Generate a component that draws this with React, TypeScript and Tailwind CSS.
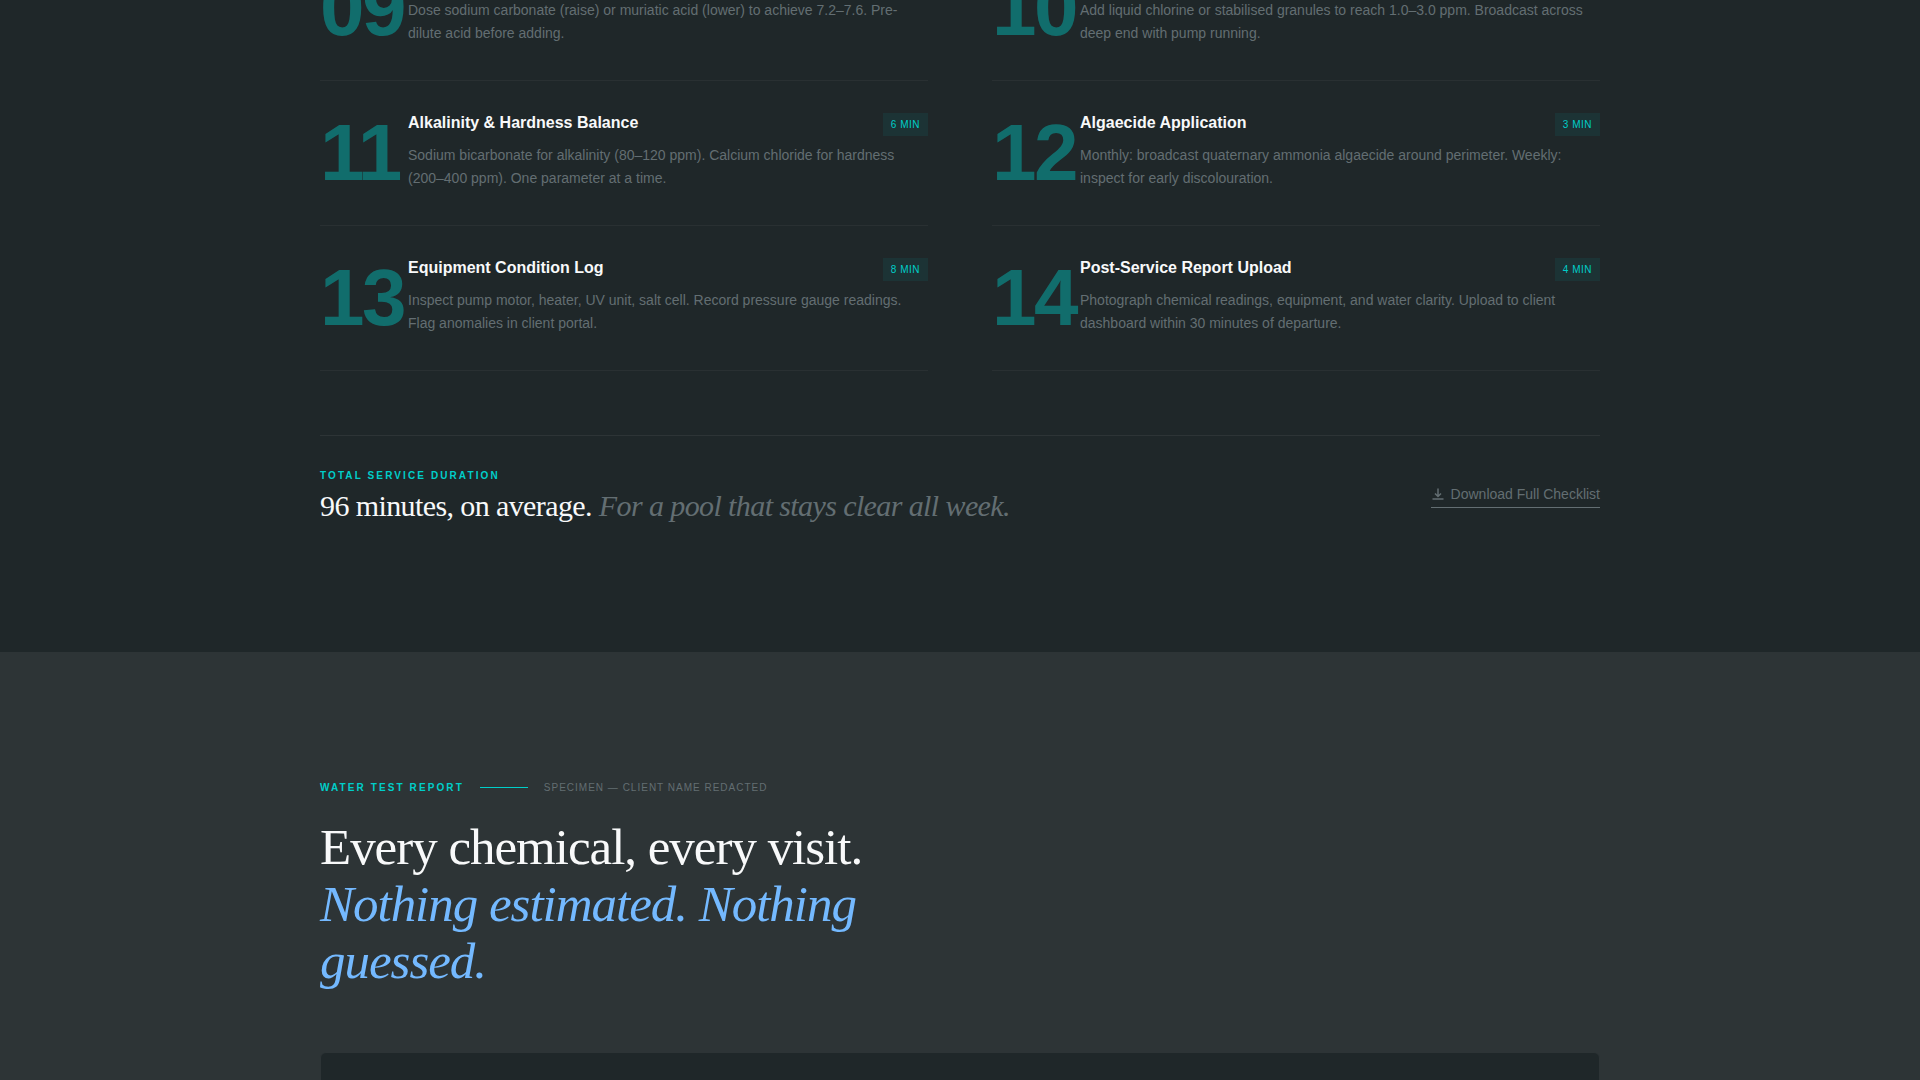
interface Step {
  number: string
  title?: string
  body: string
  minutes?: number
}

const steps: Step[] = [
  {
    number: '09',
    body: 'Dose sodium carbonate (raise) or muriatic acid (lower) to achieve 7.2–7.6. Pre-dilute acid before adding.',
  },
  {
    number: '10',
    body: 'Add liquid chlorine or stabilised granules to reach 1.0–3.0 ppm. Broadcast across deep end with pump running.',
  },
  {
    number: '11',
    title: 'Alkalinity & Hardness Balance',
    body: 'Sodium bicarbonate for alkalinity (80–120 ppm). Calcium chloride for hardness (200–400 ppm). One parameter at a time.',
    minutes: 6,
  },
  {
    number: '12',
    title: 'Algaecide Application',
    body: 'Monthly: broadcast quaternary ammonia algaecide around perimeter. Weekly: inspect for early discolouration.',
    minutes: 3,
  },
  {
    number: '13',
    title: 'Equipment Condition Log',
    body: 'Inspect pump motor, heater, UV unit, salt cell. Record pressure gauge readings. Flag anomalies in client portal.',
    minutes: 8,
  },
  {
    number: '14',
    title: 'Post-Service Report Upload',
    body: 'Photograph chemical readings, equipment, and water clarity. Upload to client dashboard within 30 minutes of departure.',
    minutes: 4,
  },
]

function StepRow({ number, title, body, minutes }: Step) {
  return (
    <li className="flex border-b border-[#2d3436]/70 py-8">
      <span className="w-22 shrink-0 text-[80px] leading-none font-bold tracking-[-0.03em] text-[#00cec9] opacity-[0.42]">
        {number}
      </span>
      <div className="min-w-0 flex-1">
        <div className="mb-2 flex h-[23px] items-start justify-between gap-4">
          {title && <h3 className="text-base leading-5 font-bold text-[#f8f9fa]">{title}</h3>}
          {minutes && (
            <span className="bg-[#00cec9]/8 px-2 py-1 text-[10px] leading-[15px] tracking-[0.05em] text-[#00cec9]">
              {minutes} MIN
            </span>
          )}
        </div>
        <p className="text-sm leading-[23px] text-[#636e72]">{body}</p>
      </div>
    </li>
  )
}

function DownloadIcon() {
  return (
    <svg
      className="size-3.5"
      viewBox="0 0 14 14"
      fill="none"
      stroke="currentColor"
      strokeWidth="1.5"
      aria-hidden="true"
    >
      <path d="M7 1.5v8M4 6.5l3 3 3-3M1.5 12h11" />
    </svg>
  )
}

function Checklist() {
  return (
    // the list is scrolled partway through its first visible row
    <section className="-mt-16 bg-[#1f2729] px-8 pb-32">
      <div className="mx-auto max-w-7xl">
        <ol className="grid grid-cols-2 gap-x-16">
          {steps.map((step) => (
            <StepRow key={step.number} {...step} />
          ))}
        </ol>

        <div className="mt-16 flex items-center justify-between border-t border-[#2d3436] pt-8">
          <div>
            <p className="mb-1 text-[10px] leading-4 font-bold tracking-[0.21em] text-[#00cec9]">
              TOTAL SERVICE DURATION
            </p>
            <p className="font-['Liberation_Serif',serif] text-[30px] leading-9 tracking-[-0.02em] text-[#f8f9fa]">
              96 minutes, on average. <em className="text-[#636e72]">For a pool that stays clear all week.</em>
            </p>
          </div>
          <a
            href="#checklist"
            className="flex items-center gap-1.5 border-b border-[#636e72] pb-[3px] text-sm text-[#636e72]"
          >
            <DownloadIcon />
            Download Full Checklist
          </a>
        </div>
      </div>
    </section>
  )
}

function Report() {
  return (
    <section className="px-8 pt-32">
      <div className="mx-auto max-w-7xl">
        <div className="mb-6 flex items-center gap-4 text-[10px] leading-[15px]">
          <span className="font-bold tracking-[0.21em] text-[#00cec9]">WATER TEST REPORT</span>
          <span className="h-px w-12 bg-[#00cec9]" />
          <span className="tracking-[0.1em] text-[#636e72]">SPECIMEN — CLIENT NAME REDACTED</span>
        </div>
        <h2 className="mb-[62px] max-w-[576px] font-['Liberation_Serif',serif] text-[51px] leading-[57px] tracking-[-0.02em] text-[#f8f9fa]">
          Every chemical, every visit.
          <br />
          <em className="text-[#74b9ff]">Nothing estimated. Nothing guessed.</em>
        </h2>
        <div className="h-40 rounded-md border border-[#2d3436] bg-[#1f2729]" />
      </div>
    </section>
  )
}

export default function App() {
  return (
    <main className="flow-root h-screen overflow-hidden bg-[#2d3436] font-['Liberation_Sans',Arial,sans-serif]">
      <Checklist />
      <Report />
    </main>
  )
}
